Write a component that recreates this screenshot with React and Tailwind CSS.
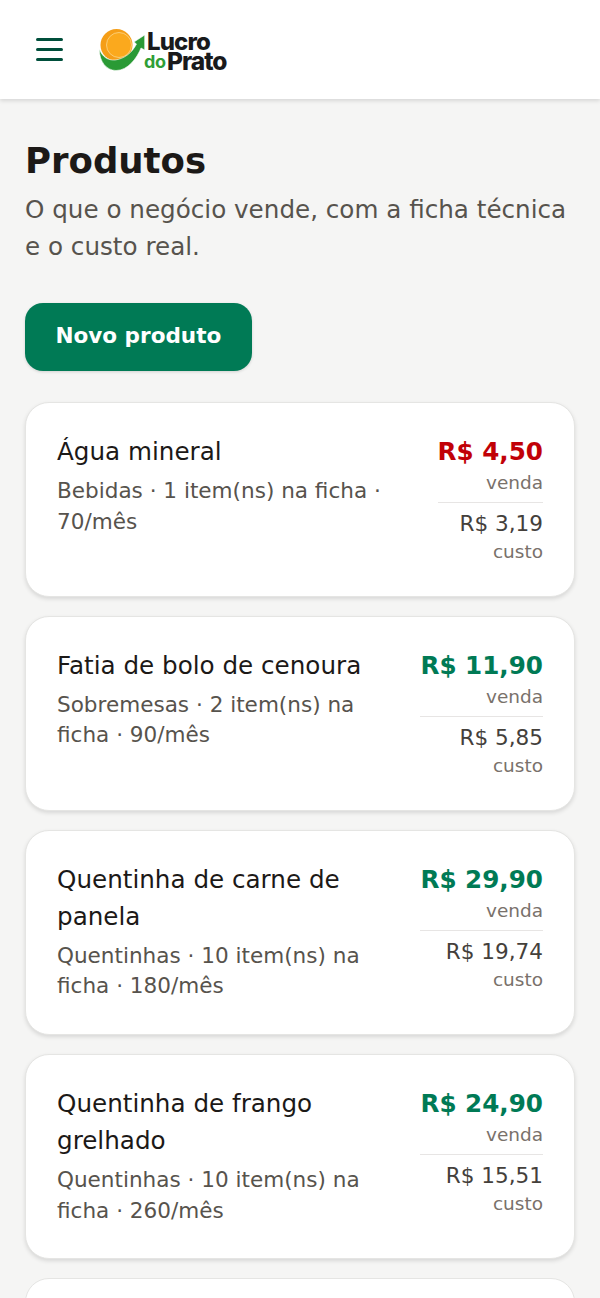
const produtos = [
	{nome: "Água mineral", info: "Bebidas · 1 item(ns) na ficha · 70/mês", venda: "R$ 4,50", custo: "R$ 3,19", ruim: true},
	{nome: "Fatia de bolo de cenoura", info: "Sobremesas · 2 item(ns) na ficha · 90/mês", venda: "R$ 11,90", custo: "R$ 5,85"},
	{nome: "Quentinha de carne de panela", info: "Quentinhas · 10 item(ns) na ficha · 180/mês", venda: "R$ 29,90", custo: "R$ 19,74"},
	{nome: "Quentinha de frango grelhado", info: "Quentinhas · 10 item(ns) na ficha · 260/mês", venda: "R$ 24,90", custo: "R$ 15,51"}
];

function Logo() {
	return (
		<div className="relative w-[128px] h-[44px] font-['Inter',sans-serif] font-extrabold">
			<svg viewBox="0 0 48 44" className="absolute left-0 top-0 w-[48px] h-[44px]">
				<circle cx="17.5" cy="17" r="16" fill="#f59e17" />
				<circle cx="20" cy="17" r="12.5" fill="#fba91d" stroke="#fbd78a" strokeWidth="0.8" />
				<path d="M0.5 21 C0 34 8 42.5 17 42.5 C29 42.5 38 30 42 20 L45.7 22 L45.7 7 L35 14 L37.5 16 C33 25 25 31 16 32 C9 32.5 3 29 0.5 21 Z" fill="#2a9a35" stroke="#ffffff" strokeWidth="0.6" />
			</svg>
			<span className="absolute left-[48px] top-[4px] text-[24px] leading-[19px] tracking-[-0.9px] text-[#191a1c]">Lucro</span>
			<span className="absolute left-[45px] top-[24px] text-[18px] leading-[19px] font-bold tracking-[-0.4px] text-[#2f9e36]">do</span>
			<span className="absolute left-[68px] top-[24px] text-[24.5px] leading-[19px] tracking-[-1px] text-[#191a1c]">Prato</span>
		</div>
	);
}

function CardProduto({produto}) {
	return (
		<div className="flex justify-between gap-4 rounded-[24px] bg-white border border-[#e5e5e3] shadow-[0_2px_4px_rgba(0,0,0,0.12)] pt-[30px] px-[31px] pb-[32.2px]">
			<div className="min-w-0 flex-1">
				<div className="text-[24.64px] leading-[37px] text-stone-900">{produto.nome}</div>
				<div className="mt-[6px] text-[21.56px] leading-[30.5px] text-stone-600">{produto.info}</div>
			</div>
			<div className="shrink-0 text-right">
				<div className={`text-[24.64px] leading-[37px] font-bold ${produto.ruim ? "text-red-700" : "text-emerald-700"}`}>{produto.venda}</div>
				<div className="text-[18.48px] leading-[26px] text-stone-500">venda</div>
				<div className="mt-[6px] border-t border-stone-200 pt-[3px] text-[21.56px] leading-[35px] text-stone-700">{produto.custo}</div>
				<div className="text-[18.48px] leading-[22.8px] text-stone-500">custo</div>
			</div>
		</div>
	);
}

export default function App() {
	return (
		<div className="h-[1298px] overflow-hidden bg-stone-100 font-['DejaVu_Sans',sans-serif]">
			<header className="flex items-center gap-[36px] h-[99px] bg-white px-[36px] shadow-[0_2px_4px_rgba(0,0,0,0.12)]">
				<div className="flex flex-col gap-[7px] w-[27px]">
					<span className="h-[3px] rounded-full bg-emerald-900"></span>
					<span className="h-[3px] rounded-full bg-emerald-900"></span>
					<span className="h-[3px] rounded-full bg-emerald-900"></span>
				</div>
				<Logo />
			</header>
			<main className="px-[25px] pt-[37px]">
				<h1 className="text-[35.5px] leading-[50px] font-bold text-stone-900">Produtos</h1>
				<p className="mt-[5px] text-[24.64px] leading-[37px] text-stone-600">O que o negócio vende, com a ficha técnica e o custo real.</p>
				<button className="block mt-[38px] h-[68px] px-[30.4px] pb-[2px] rounded-[18px] bg-emerald-700 text-white text-[21.56px] font-bold shadow-[0_1px_3px_rgba(0,0,0,0.15)]">Novo produto</button>
				<div className="mt-[31px] flex flex-col gap-[19px]">
					{produtos.map((p) => (
						<CardProduto key={p.nome} produto={p} />
					))}
					<div className="h-[195px] rounded-[24px] bg-white border border-[#e5e5e3]"></div>
				</div>
			</main>
		</div>
	);
}
